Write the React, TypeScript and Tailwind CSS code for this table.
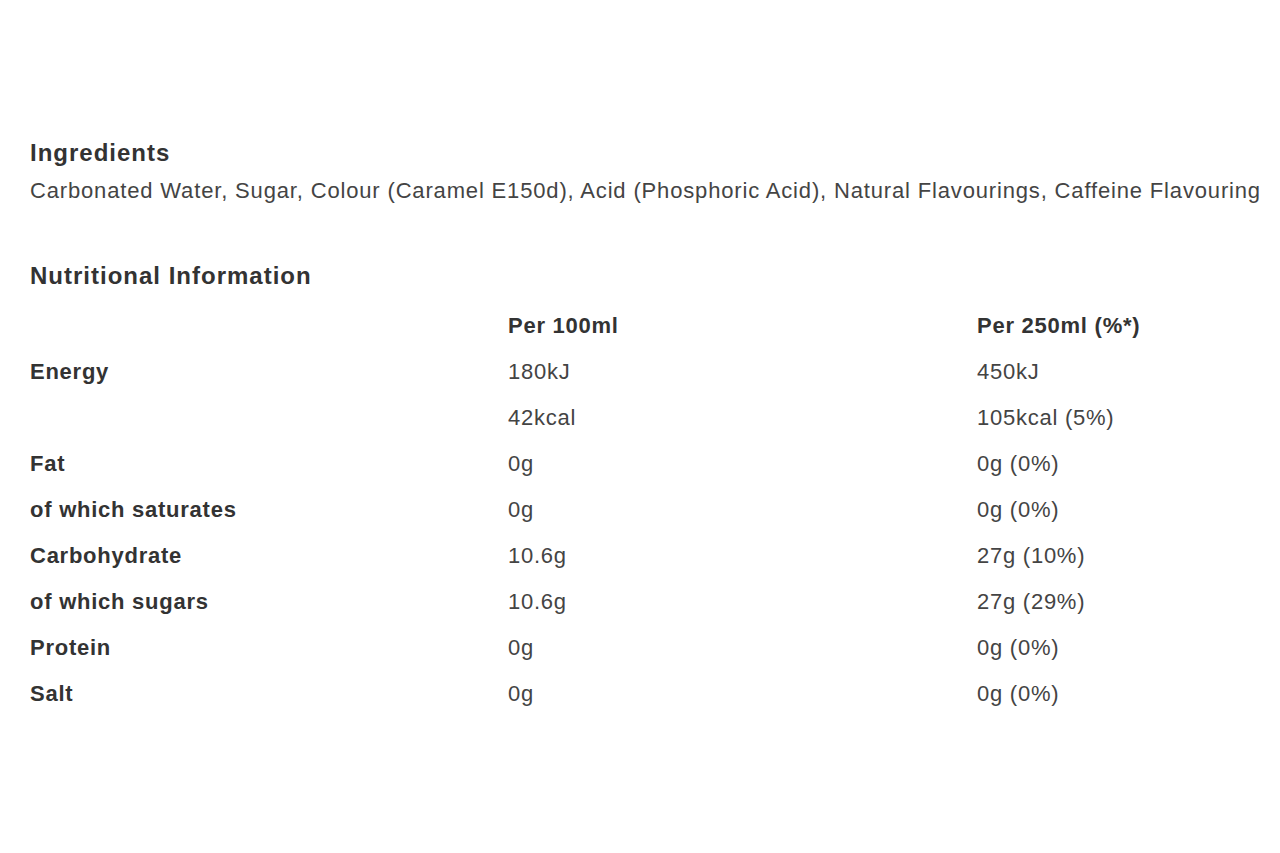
import React from 'react';

const rows = [
  { label: 'Energy', per100: '180kJ', per250: '450kJ' },
  { label: '', per100: '42kcal', per250: '105kcal (5%)' },
  { label: 'Fat', per100: '0g', per250: '0g (0%)' },
  { label: 'of which saturates', per100: '0g', per250: '0g (0%)' },
  { label: 'Carbohydrate', per100: '10.6g', per250: '27g (10%)' },
  { label: 'of which sugars', per100: '10.6g', per250: '27g (29%)' },
  { label: 'Protein', per100: '0g', per250: '0g (0%)' },
  { label: 'Salt', per100: '0g', per250: '0g (0%)' },
];

const App = () => {
  return (
    <div className="min-h-screen w-full bg-white pl-[30px] pt-[138px] text-[#444] font-[family-name:'Liberation_Sans',Arial,sans-serif]">
      <section>
        <h2 className="text-[24px] leading-[30px] font-bold tracking-[1px] text-[#333]">Ingredients</h2>
        <p className="mt-[8px] text-[22px] leading-[30px] tracking-[0.84px] whitespace-nowrap">
          Carbonated Water, Sugar, Colour (Caramel E150d), Acid (Phosphoric Acid), Natural Flavourings, Caffeine Flavouring
        </p>
      </section>

      <section className="mt-[55px]">
        <h2 className="text-[24px] leading-[30px] font-bold tracking-[1px] text-[#333]">Nutritional Information</h2>
        <div className="mt-[11px] grid grid-cols-[478px_469px_1fr] text-[22px] tracking-[0.75px] auto-rows-[46px] items-center">
          <div></div>
          <div className="font-bold text-[#333]">Per 100ml</div>
          <div className="font-bold text-[#333]">Per 250ml (%*)</div>
          {rows.map((r, i) => (
            <React.Fragment key={i}>
              <div className="font-bold text-[#333]">{r.label}</div>
              <div>{r.per100}</div>
              <div>{r.per250}</div>
            </React.Fragment>
          ))}
        </div>
      </section>
    </div>
  );
};

export default App;
